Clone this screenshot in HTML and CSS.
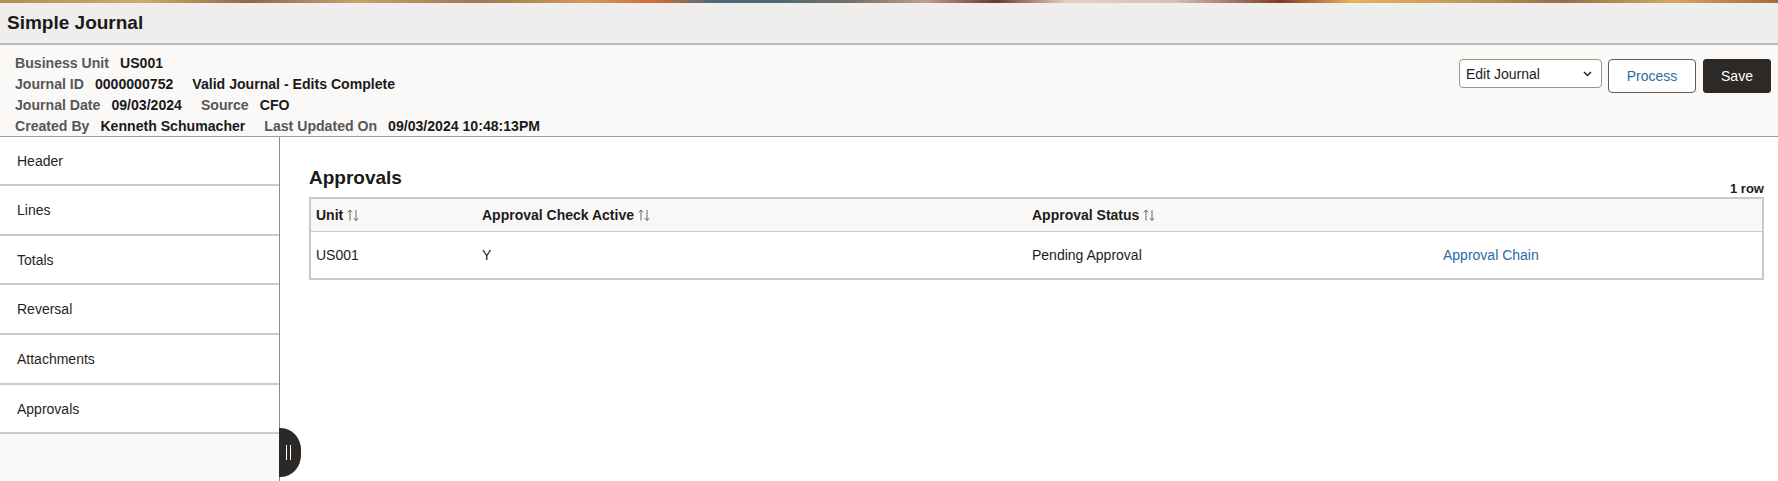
FILE: index.html
```html
<!DOCTYPE html>
<html lang="en">
<head>
<meta charset="utf-8">
<title>Simple Journal</title>
<link rel="stylesheet" href="styles.css">
</head>
<body>
<div class="page">
  <div class="banner"></div>
  <div class="titlebar"><h1 class="title">Simple Journal</h1></div>
  <div class="info">
    <div class="fields">
      <div class="line"><span class="lbl">Business Unit</span><span class="val">US001</span></div>
      <div class="line"><span class="lbl">Journal ID</span><span class="val">0000000752</span><span class="val">Valid Journal - Edits Complete</span></div>
      <div class="line"><span class="lbl">Journal Date</span><span class="val">09/03/2024</span><span class="lbl">Source</span><span class="val">CFO</span></div>
      <div class="line"><span class="lbl">Created By</span><span class="val">Kenneth Schumacher</span><span class="lbl">Last Updated On</span><span class="val">09/03/2024 10:48:13PM</span></div>
    </div>
    <div class="actions">
      <div class="select"><span>Edit Journal</span>
        <svg class="chev" width="9" height="6" viewBox="0 0 9 6"><path d="M1 1 L4.5 4.5 L8 1" fill="none" stroke="#222" stroke-width="1.5"/></svg>
      </div>
      <button class="btn btn-process">Process</button>
      <button class="btn btn-save">Save</button>
    </div>
  </div>
  <div class="workspace">
    <nav class="nav">
      <div class="nav-item">Header</div>
      <div class="nav-item">Lines</div>
      <div class="nav-item">Totals</div>
      <div class="nav-item">Reversal</div>
      <div class="nav-item">Attachments</div>
      <div class="nav-item">Approvals</div>
      <div class="nav-rest"></div>
    </nav>
    <div class="handle"><span class="bar"></span><span class="bar"></span></div>
    <main class="main">
      <div class="section-head">
        <h2 class="section-title">Approvals</h2>
        <span class="rowcount">1 row</span>
      </div>
      <div class="grid">
        <div class="grow ghead">
          <div class="cell">Unit <svg class="sort" width="12" height="12" viewBox="0 0 12 12"><path d="M3 11.5V1 M0.8 3.4 L3 1 L5.2 3.4 M9 1V11.5 M6.8 9.1 L9 11.5 L11.2 9.1" fill="none" stroke="#666" stroke-width="1"/></svg></div>
          <div class="cell">Approval Check Active <svg class="sort" width="12" height="12" viewBox="0 0 12 12"><path d="M3 11.5V1 M0.8 3.4 L3 1 L5.2 3.4 M9 1V11.5 M6.8 9.1 L9 11.5 L11.2 9.1" fill="none" stroke="#666" stroke-width="1"/></svg></div>
          <div class="cell">Approval Status <svg class="sort" width="12" height="12" viewBox="0 0 12 12"><path d="M3 11.5V1 M0.8 3.4 L3 1 L5.2 3.4 M9 1V11.5 M6.8 9.1 L9 11.5 L11.2 9.1" fill="none" stroke="#666" stroke-width="1"/></svg></div>
          <div class="cell"></div>
        </div>
        <div class="grow gbody">
          <div class="cell">US001</div>
          <div class="cell">Y</div>
          <div class="cell">Pending Approval</div>
          <div class="cell"><a class="link" href="#">Approval Chain</a></div>
        </div>
      </div>
    </main>
  </div>
</div>
</body>
</html>
```

FILE: styles.css
```css
* { box-sizing: border-box; }
html, body { margin: 0; padding: 0; }
body {
  font-family: "Liberation Sans", Arial, sans-serif;
  color: #1c1c1c;
  background: #ffffff;
  width: 1778px;
  height: 481px;
  overflow: hidden;
}
.page { position: relative; height: 481px; display: flex; flex-direction: column; }

.banner {
  height: 3px;
  background: linear-gradient(90deg,
    #b98a5a 0%, #d4a76a 8%, #8a6a4a 14%, #c9a070 20%, #a07850 27%,
    #d29a5a 33%, #cf6a3a 37%, #50697a 40%, #4f6a74 44%, #7a7068 48%,
    #c0a08a 52%, #6a3a2a 56%, #e9cfc4 60%, #d8c0b8 66%, #7c3c28 72%,
    #e2b45a 76%, #c89a5a 82%, #9a6a4a 88%, #d6a862 94%, #a06a40 100%);
}
.titlebar {
  height: 42px;
  background: #efeeec;
  border-bottom: 2px solid #bdbcbb;
  display: flex;
  align-items: center;
  padding-left: 7px;
}
.title {
  margin: 0;
  font-size: 19px;
  font-weight: 700;
  color: #1a1a1a;
  line-height: 22px;
}

.info {
  height: 92px;
  background: #faf9f8;
  border-bottom: 1px solid #9e9e9e;
  display: flex;
  justify-content: space-between;
  align-items: flex-start;
}
.fields { padding: 8px 0 0 15px; }
.line { height: 21px; line-height: 21px; font-size: 14.1px; font-weight: 700; white-space: nowrap; }
.lbl { color: #575757; margin-right: 11px; }
.val { color: #1a1a1a; margin-right: 19px; }

.actions { display: flex; align-items: flex-start; padding: 14px 7px 0 0; }
.select {
  width: 143px;
  height: 29px;
  border: 1px solid #a39485;
  border-radius: 4px;
  background: #ffffff;
  display: flex;
  align-items: center;
  justify-content: space-between;
  padding: 0 9px 0 6px;
  font-size: 14px;
  color: #222;
  margin-right: 6px;
}
.chev { display: block; }
.btn {
  font-family: "Liberation Sans", Arial, sans-serif;
  font-size: 14px;
  height: 34px;
  border-radius: 4px;
  padding: 0;
  cursor: pointer;
}
.btn-process {
  width: 88px;
  background: #ffffff;
  border: 1px solid #5e5e5e;
  color: #2e6ca4;
  margin-right: 7px;
}
.btn-save {
  width: 68px;
  background: #2c2927;
  border: 1px solid #2c2927;
  color: #ffffff;
  border-radius: 3px;
}

.workspace { flex: 1; display: flex; position: relative; }
.nav {
  width: 280px;
  border-right: 1px solid #8c8c8c;
  display: flex;
  flex-direction: column;
  background: #ffffff;
}
.nav-item {
  height: 49.7px;
  border-bottom: 2px solid #cacaca;
  padding-left: 17px;
  font-size: 14px;
  color: #1f1f1f;
  display: flex;
  align-items: center;
  flex-shrink: 0;
}
.nav-item:first-child { height: 49px; }
.nav-rest { flex: 1; background: #faf9f9; }

.handle {
  position: absolute;
  left: 279px;
  top: 291px;
  width: 22px;
  height: 49px;
  background: #2b2826;
  border-radius: 0 20px 20px 0 / 0 22px 22px 0;
  display: flex;
  align-items: center;
  justify-content: center;
  gap: 2.5px;
  padding-right: 3px;
}
.bar { width: 1.5px; height: 15px; background: #ffffff; }

.main { flex: 1; padding: 28px 14px 0 29px; }
.section-head {
  display: flex;
  justify-content: space-between;
  align-items: flex-end;
  height: 32px;
}
.section-title {
  margin: 0 0 8px 0;
  font-size: 19px;
  font-weight: 700;
  line-height: 22px;
  color: #1a1a1a;
}
.rowcount { font-size: 13px; font-weight: 700; line-height: 16px; color: #1a1a1a; }

.grid {
  border: 2px solid #c9c9c9;
}
.grow {
  display: grid;
  grid-template-columns: 166px 550px 411px 1fr;
  align-items: center;
}
.ghead {
  height: 33px;
  background: #faf8f7;
  border-bottom: 1px solid #c9c9c9;
  font-weight: 700;
}
.gbody { height: 46px; }
.cell { padding-left: 5px; font-size: 14px; color: #1c1c1c; display: flex; align-items: center; white-space: nowrap; }
.sort { margin-left: 4px; }
.link { color: #2e6ca4; text-decoration: none; }
```
